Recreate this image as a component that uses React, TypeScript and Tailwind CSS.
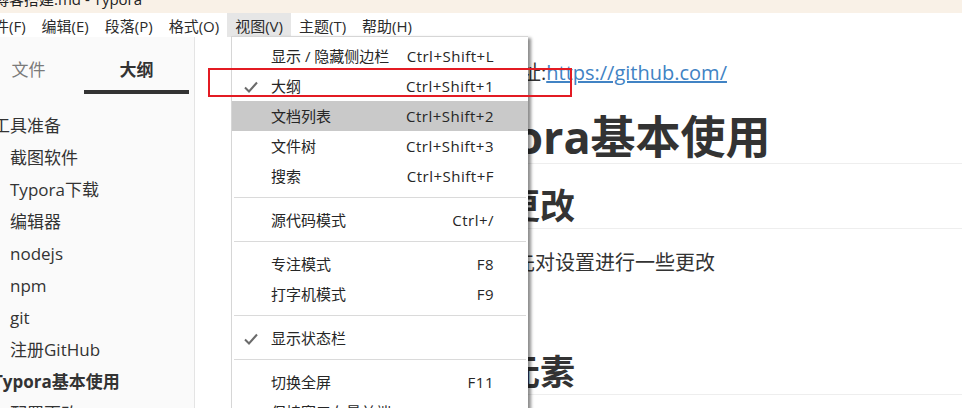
import React from "react";

// ── Data ───────────────────────────────────────────────────────────────────────

type MenuRow =
  | { kind: "item"; label: string; shortcut?: string; checked?: boolean; active?: boolean }
  | { kind: "sep" };

const menuRows: MenuRow[] = [
  { kind: "item", label: "显示 / 隐藏侧边栏", shortcut: "Ctrl+Shift+L" },
  { kind: "item", label: "大纲", shortcut: "Ctrl+Shift+1", checked: true },
  { kind: "item", label: "文档列表", shortcut: "Ctrl+Shift+2", active: true },
  { kind: "item", label: "文件树", shortcut: "Ctrl+Shift+3" },
  { kind: "item", label: "搜索", shortcut: "Ctrl+Shift+F" },
  { kind: "sep" },
  { kind: "item", label: "源代码模式", shortcut: "Ctrl+/" },
  { kind: "sep" },
  { kind: "item", label: "专注模式", shortcut: "F8" },
  { kind: "item", label: "打字机模式", shortcut: "F9" },
  { kind: "sep" },
  { kind: "item", label: "显示状态栏", checked: true },
  { kind: "sep" },
  { kind: "item", label: "切换全屏", shortcut: "F11" },
  { kind: "item", label: "保持窗口在最前端" },
];

const menuBar = ["文件(F)", "编辑(E)", "段落(P)", "格式(O)", "视图(V)", "主题(T)", "帮助(H)"];

const outline: { text: string; level: 1 | 2; bold?: boolean }[] = [
  { text: "工具准备", level: 1 },
  { text: "截图软件", level: 2 },
  { text: "Typora下载", level: 2 },
  { text: "编辑器", level: 2 },
  { text: "nodejs", level: 2 },
  { text: "npm", level: 2 },
  { text: "git", level: 2 },
  { text: "注册GitHub", level: 2 },
  { text: "Typora基本使用", level: 1, bold: true },
  { text: "配置更改", level: 2 },
];

// ── Pieces ─────────────────────────────────────────────────────────────────────

function Check() {
  return (
    <svg width="14" height="12" viewBox="0 0 14 12" className="absolute left-[12px] top-[10px]">
      <path d="M1 6.5 L5 10.5 L13 1.5" fill="none" stroke="#6b6b6b" strokeWidth="2" />
    </svg>
  );
}

function ViewMenu() {
  return (
    <div className="absolute left-[231px] top-[36px] w-[297px] bg-white border-l border-t border-[#d6d6d6] shadow-[3px_2px_3px_rgba(0,0,0,0.45)] pt-[4px] pb-[40px] text-[15px] text-[#262626]">
      {menuRows.map((row, i) =>
        row.kind === "sep" ? (
          <div key={i} className="mx-[2px] mt-[6px] mb-[7px] h-px bg-[#dadada]" />
        ) : (
          <div
            key={i}
            className={`relative flex h-[30px] items-center pl-[39px] pr-[34px] ${row.active ? "bg-[#c9c9c9]" : ""}`}
          >
            {row.checked && <Check />}
            <span>{row.label}</span>
            {row.shortcut && <span className="ml-auto tracking-[0.5px]">{row.shortcut}</span>}
          </div>
        )
      )}
    </div>
  );
}

// ── Main Export ────────────────────────────────────────────────────────────────

export default function App() {
  return (
    <div className="relative flex h-[408px] w-[962px] flex-col overflow-hidden bg-white text-[#333] [font-family:'Open_Sans','Noto_Sans_CJK_SC',sans-serif]">
      {/* Title bar */}
      <div className="h-[13px] shrink-0 overflow-hidden bg-[#f9f1e7]">
        <div className="-ml-[6px] -mt-[12px] text-[15px] leading-[22px] text-[#222]">博客搭建.md - Typora</div>
      </div>

      {/* Menu bar */}
      <div className="flex h-[24px] shrink-0 items-center bg-white text-[15px] text-[#2b2b2b]">
        {menuBar.map((m, i) => (
          <div
            key={m}
            className={`flex h-full items-center px-[8px] pt-[2px] ${i === 0 ? "-ml-[29px]" : ""} ${m === "视图(V)" ? "bg-[#e6e6e6]" : ""}`}
          >
            {m}
          </div>
        ))}
      </div>

      <div className="flex min-h-0 flex-1">
        {/* Sidebar */}
        <aside className="w-[195px] shrink-0 overflow-hidden border-r border-[#e4e4e4] bg-[#fafafa]">
          <div className="-ml-[21px] w-[216px]">
            <div className="flex pt-[21px]">
              <div className="w-[99px] pb-[12px] text-center text-[17px] leading-[24px] text-[#7a7a7a]">文件</div>
              <div className="ml-[6px] w-[105px]">
                <div className="pb-[8px] text-center text-[17px] font-bold leading-[24px] text-[#333]">大纲</div>
                <div className="h-[4px] bg-[#333]" />
              </div>
            </div>
            <div className="mt-[16px]">
              {outline.map((o) => (
                <div
                  key={o.text}
                  className={`h-[32px] text-[17px] leading-[32px] ${o.level === 1 ? "pl-[14px]" : "pl-[31px]"} ${o.bold ? "font-bold" : ""}`}
                >
                  {o.text}
                </div>
              ))}
            </div>
          </div>
        </aside>

        {/* Editor */}
        <main className="min-w-0 flex-1 bg-white pl-[240px] pt-[21px] text-[#333]">
          <p className="text-[20px] leading-[30px]">
            GitHub地址:<a className="text-[#4183c4] underline">https://github.com/</a>
          </p>
          <h1 className="mt-[22px] border-b border-[#eee] text-[45px] font-bold leading-[53px]">Typora基本使用</h1>
          <h2 className="mt-[22px] border-b border-[#eee] pb-[2px] text-[35px] font-bold leading-[40px]">配置更改</h2>
          <p className="mt-[19px] text-[20px] leading-[30px]">打开后首先对设置进行一些更改</p>
          <h2 className="mt-[74px] border-b border-[#eee] pb-[2px] text-[35px] font-bold leading-[40px]">基本元素</h2>
        </main>
      </div>

      <ViewMenu />

      {/* Annotation box */}
      <div className="absolute left-[208px] top-[68px] h-[29px] w-[364px] border-2 border-[#e31b23]" />
    </div>
  );
}
